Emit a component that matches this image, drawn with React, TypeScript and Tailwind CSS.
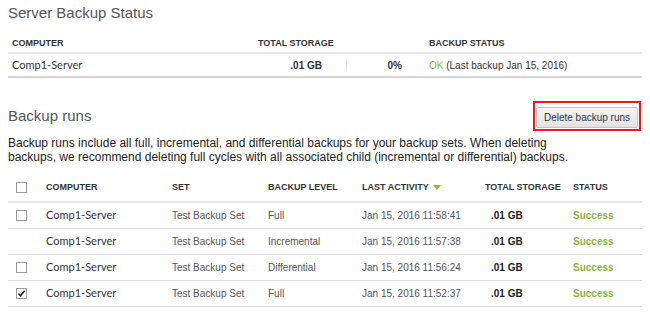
const runs = [
  { check: "empty", level: "Full", time: "Jan 15, 2016 11:58:41" },
  { check: "none", level: "Incremental", time: "Jan 15, 2016 11:57:38" },
  { check: "empty", level: "Differential", time: "Jan 15, 2016 11:56:24" },
  { check: "checked", level: "Full", time: "Jan 15, 2016 11:52:37" },
];

const Checkbox = ({ checked = false }: { checked?: boolean }) => (
  <span className="flex h-[11px] w-[11px] items-center justify-center border border-[#9a9a9a] bg-white">
    {checked && (
      <svg width="9" height="9" viewBox="0 0 9 9">
        <path d="M1.5 4.5 L3.5 6.8 L7.6 1.8" fill="none" stroke="#222" strokeWidth="1.6" />
      </svg>
    )}
  </span>
);

const App = () => {
  return (
    <div className="h-[314px] w-[650px] overflow-hidden bg-white px-2 pt-[3px] font-['Liberation_Sans',Arial,sans-serif] text-[#333]">
      {/* server status */}
      <h2 className="text-[15px] leading-[20px] text-[#555]">Server Backup Status</h2>
      <div className="mt-[12px] flex h-[19px] items-center border-b-2 border-[#e6e6e6] text-[9px] font-bold">
        <div className="w-[250px] pl-1">COMPUTER</div>
        <div className="w-[171px]">TOTAL STORAGE</div>
        <div>BACKUP STATUS</div>
      </div>
      <div className="flex h-[24px] items-center border-b-2 border-[#d6d6d6] text-[10px]">
        <div className="w-[250px] pl-1 font-['Lato',sans-serif] text-[11px] text-[#333]">Comp1-Server</div>
        <div className="w-[64px] text-right font-bold">.01 GB</div>
        <div className="h-[12px] w-[25px] border-r border-[#ddd]" />
        <div className="w-[55px] text-right font-bold">0%</div>
        <div className="pl-[27px]">
          <span className="text-[#8ab63a]">OK</span> (Last backup Jan 15, 2016)
        </div>
      </div>

      {/* backup runs */}
      <div className="mt-[24px] flex h-[27px] items-center justify-between">
        <h2 className="text-[15px] leading-[20px] text-[#555]">Backup runs</h2>
        <div className="mr-px border-2 border-[#e41e1e] p-px">
          <button className="h-[21px] w-[102px] rounded-[2px] border border-[#c4c4c4] bg-gradient-to-b from-[#f7f7f7] to-[#e2e2e2] text-[10px] text-[#333]">
            Delete backup runs
          </button>
        </div>
      </div>
      <p className="mt-[7px] text-[12px] leading-[14px] text-[#222]">
        Backup runs include all full, incremental, and differential backups for your backup sets. When deleting
        <br />
        backups, we recommend deleting full cycles with all associated child (incremental or differential) backups.
      </p>

      <div className="mt-[10px]">
        <div className="grid h-[29px] grid-cols-[38px_126px_96px_94px_123px_88px_1fr] items-center border-b-2 border-[#e6e6e6] text-[9px] font-bold">
          <div className="pl-2">
            <Checkbox />
          </div>
          <div>COMPUTER</div>
          <div>SET</div>
          <div>BACKUP LEVEL</div>
          <div className="flex items-center gap-[4px]">
            LAST ACTIVITY
            <svg width="8" height="5" viewBox="0 0 8 5">
              <path d="M0 0 H8 L4 5 Z" fill="#8ab63a" />
            </svg>
          </div>
          <div>TOTAL STORAGE</div>
          <div>STATUS</div>
        </div>
        {runs.map((r, i) => (
          <div
            key={i}
            className="grid h-[26px] grid-cols-[38px_126px_96px_94px_123px_88px_1fr] items-center border-b border-[#dcdcdc] text-[10px] text-[#555]"
          >
            <div className="pl-2">{r.check !== "none" && <Checkbox checked={r.check === "checked"} />}</div>
            <div className="font-['Lato',sans-serif] text-[11px] text-[#333]">Comp1-Server</div>
            <div>Test Backup Set</div>
            <div>{r.level}</div>
            <div>{r.time}</div>
            <div className="pl-[6px] font-bold text-[#222]">.01 GB</div>
            <div className="font-bold text-[#8ab63a]">Success</div>
          </div>
        ))}
      </div>
    </div>
  );
};

export default App;
